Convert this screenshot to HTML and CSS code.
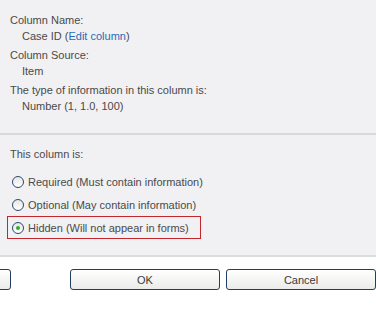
FILE: index.html
```html
<!DOCTYPE html>
<html lang="en">
<head>
    <meta charset="UTF-8">
    <title>Column Settings</title>
    <link rel="stylesheet" href="styles.css">
</head>
<body>
    <div class="panel">
        <div class="section info">
            <div class="field">
                <div class="label">Column Name:</div>
                <div class="value">Case ID (<a href="#">Edit column</a>)</div>
            </div>
            <div class="field">
                <div class="label">Column Source:</div>
                <div class="value">Item</div>
            </div>
            <div class="field">
                <div class="label">The type of information in this column is:</div>
                <div class="value">Number (1, 1.0, 100)</div>
            </div>
        </div>
        <div class="section options">
            <div class="label">This column is:</div>
            <div class="choices">
                <label class="choice"><span class="radio"></span>Required (Must contain information)</label>
                <label class="choice"><span class="radio"></span>Optional (May contain information)</label>
                <label class="choice selected"><span class="radio checked"></span>Hidden (Will not appear in forms)</label>
            </div>
        </div>
    </div>
    <div class="footer">
        <button type="button" class="btn stub"></button>
        <div class="actions">
            <button type="button" class="btn">OK</button>
            <button type="button" class="btn">Cancel</button>
        </div>
    </div>
</body>
</html>
```

FILE: styles.css
```css
* {
    margin: 0;
    padding: 0;
    box-sizing: border-box;
}

body {
    background: white;
    font-family: 'Liberation Sans', Arial, sans-serif;
    font-size: 11px;
    color: #4a4a4a;
    overflow: hidden;
}

.panel {
    background: #f1f1f3;
    border-bottom: 2px solid #dcdcdf;
}

.section {
    padding-left: 10px;
}

.info {
    padding-top: 12px;
    padding-bottom: 19px;
    border-bottom: 2px solid #d9d9dc;
}

.label,
.value {
    line-height: 16px;
}

.field + .field {
    margin-top: 3px;
}

.value {
    padding-left: 12px;
}

.value a {
    color: #2a6bb5;
    text-decoration: none;
}

.options {
    padding-top: 11px;
    padding-bottom: 16px;
}

.choices {
    margin-top: 8px;
    margin-left: -3px;
}

.choice {
    display: flex;
    align-items: center;
    width: 194px;
    height: 23px;
    padding-left: 4px;
    border: 1px solid transparent;
    font-size: 11px;
    white-space: nowrap;
}

.choice.selected {
    border-color: #c4262e;
}

.radio {
    position: relative;
    flex: none;
    width: 12px;
    height: 12px;
    margin-right: 4px;
    border: 1px solid #2c4a6a;
    border-radius: 50%;
    background: linear-gradient(#e6e6e6, #ffffff);
}

.radio.checked::after {
    content: "";
    position: absolute;
    left: 3px;
    top: 3px;
    width: 4px;
    height: 4px;
    border-radius: 50%;
    background: #36a836;
}

.footer {
    display: flex;
    justify-content: space-between;
    padding-top: 12px;
}

.actions {
    display: flex;
    gap: 6px;
}

.btn {
    width: 150px;
    height: 21px;
    border: 1px solid #233f5f;
    border-radius: 3px;
    background: linear-gradient(#ffffff, #ebebe8);
    font-family: 'Liberation Sans', Arial, sans-serif;
    font-size: 11px;
    color: #3a3a3a;
}

.stub {
    width: 16px;
    margin-left: -5px;
}
```
